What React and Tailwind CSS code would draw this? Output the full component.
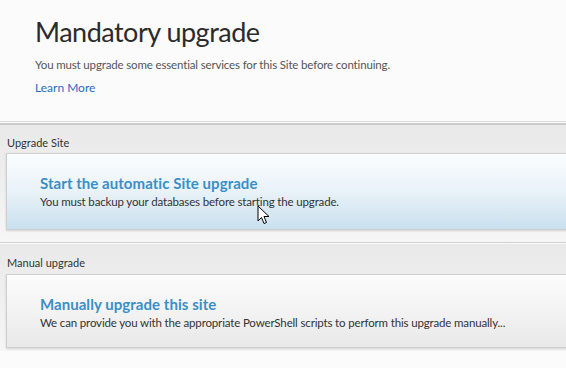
import React from "react";

const font = { fontFamily: '"Segoe UI", Lato, "Noto Sans", sans-serif' };

const Section = ({ label, title, text, tone, top, cardH, bottom, children }) => (
  <div className={`bg-gradient-to-b from-[#e9e9e9] via-[#efefef] to-[#f6f6f6] ${bottom}`}>
    <div className={`pl-[7px] text-[11px] leading-[14px] text-[#333] ${top}`}>{label}</div>
    <div
      className={`relative ml-[6px] -mr-[4px] border border-[#cfcfcf] shadow-[0_1px_2px_rgba(0,0,0,0.15)] ${cardH} ${
        tone === "blue"
          ? "bg-gradient-to-b from-[#fbfdfe] via-[#e9f2f8] to-[#c9e0ee]"
          : "bg-gradient-to-b from-[#fcfcfc] via-[#f3f3f3] to-[#e8e8e8]"
      }`}
    >
      <div className="pl-[33px] pt-[19px]">
        <div className="whitespace-nowrap text-[15px] font-bold leading-[20px] tracking-[0.05px] text-[#3a8fc7]">{title}</div>
        <div className="mt-[1px] whitespace-nowrap text-[11.5px] tracking-[-0.15px] leading-[16px] text-[#333]">{text}</div>
      </div>
      {children}
    </div>
  </div>
);

export default function App() {
  return (
    <div className="h-[368px] w-[566px] overflow-hidden bg-[#fbfbfb]" style={font}>
      <div className="h-[121px] pl-[35px] pt-[14px]">
        <h1 className="text-[27px] font-normal leading-[36px] tracking-[-0.5px] text-[#2b2b2b]">Mandatory upgrade</h1>
        <p className="mt-[7px] text-[11.5px] leading-[16px] tracking-[-0.15px] text-[#555]">
          You must upgrade some essential services for this Site before continuing.
        </p>
        <a className="mt-[7px] block text-[12px] leading-[16px] text-[#2a6bc0]">Learn More</a>
      </div>
      <div className="h-[1px] bg-[#dcdcdc]" />
      <div className="h-[1px] bg-[#fafafa]" />
      <div className="h-[2px] bg-[#cbcbcb]" />
      <Section
        label="Upgrade Site"
        title="Start the automatic Site upgrade"
        text="You must backup your databases before starting the upgrade."
        tone="blue"
        top="h-[28px] pt-[11px]"
        cardH="h-[77px]"
        bottom="pb-[12px]"
      >
        <svg className="absolute left-[250px] top-[51px]" width="13" height="20" viewBox="0 0 13 20">
          <path d="M1 1 L1 16 L4.5 12.5 L7 18.5 L9.5 17.5 L7 11.5 L12 11.5 Z" fill="#fff" stroke="#000" strokeWidth="1" strokeLinejoin="round" />
        </svg>
      </Section>
      <div className="h-[1px] bg-[#d0d0d0]" />
      <div className="h-[1px] bg-[#fafafa]" />
      <Section
        label="Manual upgrade"
        title="Manually upgrade this site"
        text="We can provide you with the appropriate PowerShell scripts to perform this upgrade manually..."
        tone="gray"
        top="h-[30px] pt-[12px]"
        cardH="h-[74px]"
        bottom="pb-[3px]"
      />
    </div>
  );
}
